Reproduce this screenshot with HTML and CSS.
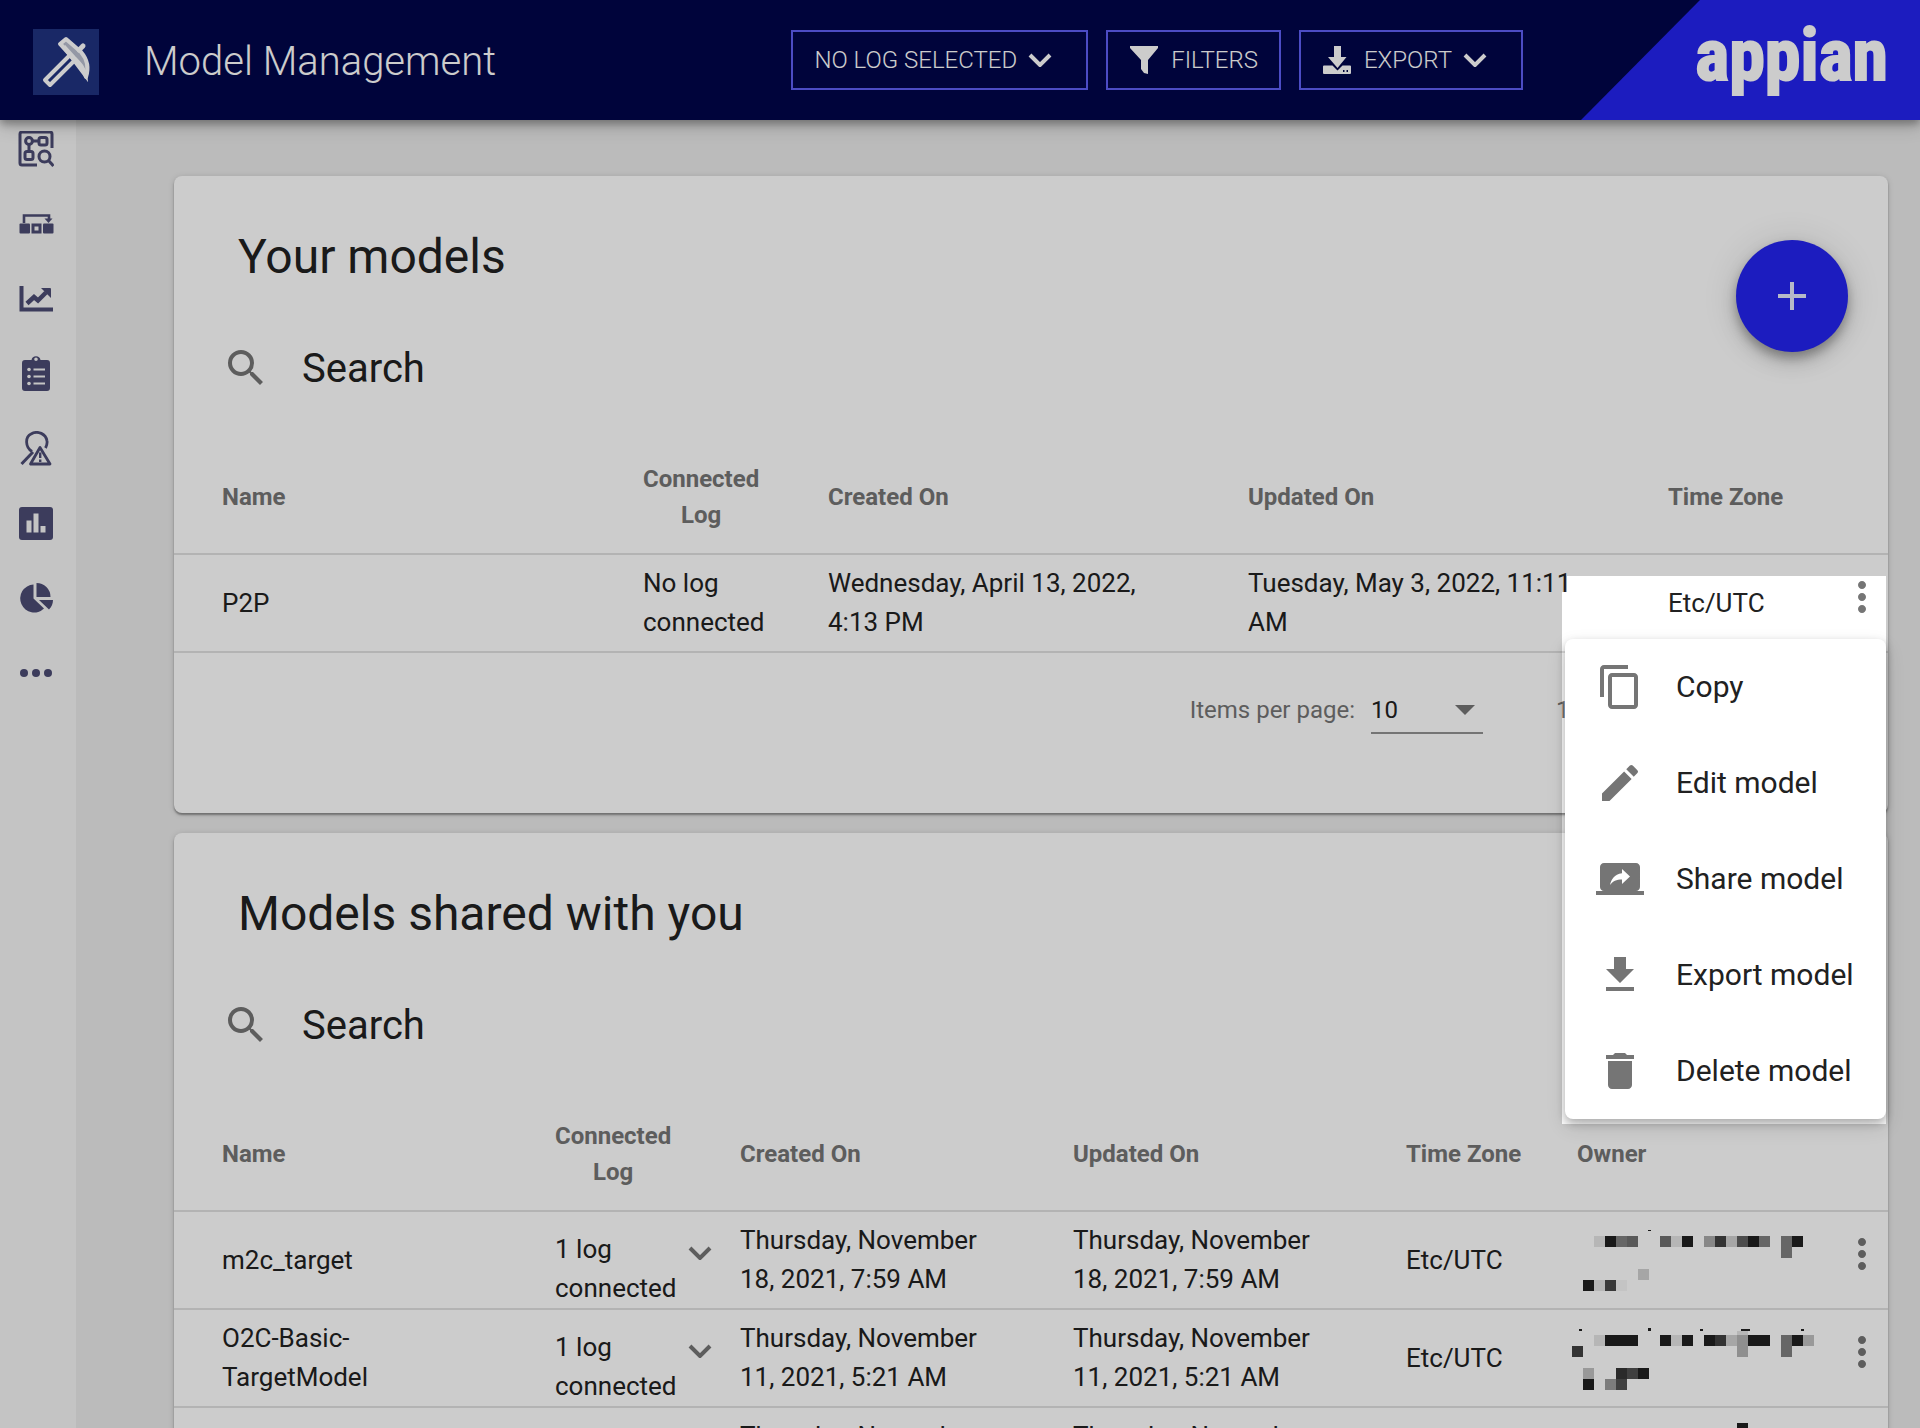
FILE: index.html
```html
<!DOCTYPE html>
<html lang="en">
<head>
<meta charset="utf-8">
<title>Model Management</title>
<link rel="stylesheet" href="styles.css">
</head>
<body>
<svg class="sprite" aria-hidden="true">
  <symbol id="chevron" viewBox="0 0 24 14"><path d="M2 2l10 10L22 2" fill="none" stroke="currentColor" stroke-width="4"/></symbol>
  <symbol id="search" viewBox="0 0 24 24"><path d="M15.5 14h-.79l-.28-.27A6.47 6.47 0 0 0 16 9.5 6.5 6.5 0 1 0 9.5 16c1.61 0 3.09-.59 4.23-1.57l.27.28v.79l5 4.99L20.49 19l-4.99-5zm-6 0C7.01 14 5 11.99 5 9.5S7.01 5 9.5 5 14 7.01 14 9.5 11.99 14 9.5 14z"/></symbol>
  <symbol id="more" viewBox="0 0 24 24"><path d="M12 8c1.1 0 2-.9 2-2s-.9-2-2-2-2 .9-2 2 .9 2 2 2zm0 2c-1.100 0-2 .9-2 2s.9 2 2 2 2-.9 2-2-.9-2-2-2zm0 6c-1.100 0-2 .9-2 2s.9 2 2 2 2-.9 2-2-.9-2-2-2z"/></symbol>
</svg>

<header class="topbar">
  <svg class="brand" viewBox="0 0 66 66" aria-hidden="true">
    <rect width="66" height="66" fill="#203280"/>
    <path d="M37 26L12 51l5 5 25-25z" fill="none" stroke="#fff" stroke-width="4" stroke-linejoin="round"/>
    <path d="M33 10l-6 5 10 11 5 5c5 4 9 10 11 17 3-9 1-18-5-25z" fill="#b9bfcf" stroke="#fff" stroke-width="4" stroke-linejoin="round"/>
    <path d="M29 16l24 32c-1-9-6-14-12-20L31 17" fill="#fff" stroke="#fff" stroke-width="3"/>
    <path d="M46 21l4-4" stroke="#fff" stroke-width="5" stroke-linecap="round"/>
  </svg>
  <h1 class="page-title">Model Management</h1>
  <div class="actions">
    <button class="action wide" type="button">NO LOG SELECTED<svg class="chev" aria-hidden="true"><use href="#chevron"/></svg></button>
    <button class="action" type="button">
      <svg class="lead" viewBox="0 0 28 28" aria-hidden="true"><path d="M0 0h28v2L18 14v14l-4-1-3-4v-9L0 2z"/></svg>FILTERS</button>
    <button class="action wide" type="button">
      <svg class="lead" viewBox="0 0 28 28" aria-hidden="true"><path d="M11 0h7v11h5.500L14.500 22 5 11h6z"/><path d="M1 19.500h8.500l5 5 5-5H27a1 1 0 0 1 1 1V27a1 1 0 0 1-1 1H1a1 1 0 0 1-1-1v-6.500a1 1 0 0 1 1-1z"/><path d="M20 25h1.500M23.500 25H25" stroke="#00064a" stroke-width="2"/></svg>EXPORT<svg class="chev" aria-hidden="true"><use href="#chevron"/></svg></button>
  </div>
  <div class="vendor"><span class="wordmark">appian</span></div>
</header>

<div class="shell">
  <nav class="rail" aria-label="Sections">
    <a href="#discovery" aria-label="Discovery"><svg viewBox="0 0 36 36"><g fill="none" stroke="currentColor" stroke-width="3"><path d="M34 17V3a2 2 0 0 0-2-2H4a2 2 0 0 0-2 2v29a2 2 0 0 0 2 2h15"/><circle cx="11" cy="10" r="3.400"/><rect x="21" y="6.500" width="8" height="7.500" rx="2"/><rect x="7" y="20.500" width="8" height="8" rx="2"/><path d="M14.500 10H21M11 14v6"/><circle cx="26.500" cy="25.500" r="5.500"/><path d="M30.500 29.500l5 5.500" stroke-width="3"/></g></svg></a>
    <a href="#process" aria-label="Process"><svg viewBox="0 0 36 36"><path d="M6 17V9.500h25V14" fill="none" stroke="currentColor" stroke-width="2.600"/><path d="M26.500 12.500h8L30.500 17z"/><rect x="1.500" y="17.500" width="10.500" height="10" rx="1"/><rect x="25" y="17.500" width="10.500" height="10" rx="1"/><rect x="15" y="19" width="7" height="7" fill="none" stroke="currentColor" stroke-width="3"/></svg></a>
    <a href="#trends" aria-label="Trends"><svg viewBox="0 0 36 36"><path d="M3.500 5v23.500H35" fill="none" stroke="currentColor" stroke-width="4"/><path d="M9 22.500l7-6.500 4 3.500 8-8" fill="none" stroke="currentColor" stroke-width="4.500"/><path d="M23 7h9a1 1 0 0 1 1 1v9z"/></svg></a>
    <a href="#tasks" aria-label="Tasks"><svg viewBox="0 0 36 36"><path fill-rule="evenodd" d="M7 4h6.500a4.600 4.600 0 0 1 9 0H29a3 3 0 0 1 3 3v25a3 3 0 0 1-3 3H7a3 3 0 0 1-3-3V7a3 3 0 0 1 3-3zm11-2.500a1.800 1.800 0 1 0 0 3.600 1.800 1.800 0 0 0 0-3.600z"/><g fill="#f5f5f5"><circle cx="11" cy="13.500" r="1.800"/><circle cx="11" cy="20.500" r="1.800"/><circle cx="11" cy="27.500" r="1.800"/><path d="M15.500 12.500H27v2H15.500zM15.500 19.500H27v2H15.500zM15.500 26.500H27v2H15.500z"/></g></svg></a>
    <a href="#alerts" aria-label="Alerts"><svg viewBox="0 0 36 36"><g fill="none" stroke="currentColor" stroke-width="2.800"><path d="M14 20.500C7 16 7 6 13 3c7-4 15 0 16 7 .500 3-.500 5-1.500 7"/><path d="M15 21L3.500 33" stroke-width="3"/><path d="M22 16.500L12.500 33h19.500z" stroke-linejoin="round"/></g><path d="M21 21.500h2.400v5.500H21zM21 28.500h2.400v2.400H21z"/></svg></a>
    <a href="#dashboards" aria-label="Dashboards"><svg viewBox="0 0 36 36"><rect x="1" y="1" width="34" height="33" rx="3"/><path fill="#f5f5f5" d="M8.500 14.500h5v12h-5zM15.500 7.500h5v19h-5zM22.500 20h5v6.500h-5z"/></svg></a>
    <a href="#reports" aria-label="Reports"><svg viewBox="0 0 36 36"><path d="M15.500 3.500v14l10.500 10A14 14 0 1 1 15.500 3.500zM18.500 2A14 14 0 0 1 32.500 16h-14zM21 19h14c0 4-1.500 7-4 9.500z"/></svg></a>
    <a href="#more-sections" aria-label="More"><svg viewBox="0 0 36 36"><circle cx="6" cy="17" r="4"/><circle cx="18" cy="17" r="4"/><circle cx="30" cy="17" r="4"/></svg></a>
  </nav>

  <main class="content">
    <section class="card">
      <h2 class="card-title">Your models</h2>
      <button class="fab" type="button" aria-label="Add model"><svg viewBox="0 0 28 28"><path d="M12 0h4v12h12v4H16v12h-4V16H0v-4h12z"/></svg></button>
      <label class="search"><svg aria-hidden="true"><use href="#search"/></svg><input type="search" placeholder="Search" aria-label="Search your models"></label>
      <table class="models">
        <colgroup><col><col class="c-log"><col class="c-date-lg"><col class="c-date-lg"><col class="c-zone-lg"><col class="c-more"></colgroup>
        <thead><tr><th class="name">Name</th><th><span class="stack">Connected<br>Log</span></th><th>Created On</th><th>Updated On</th><th>Time Zone</th><th></th></tr></thead>
        <tbody>
          <tr>
            <td class="name">P2P</td><td class="log">No log connected</td><td class="date">Wednesday, April 13, 2022, 4:13 PM</td><td class="date">Tuesday, May 3, 2022, 11:11 AM</td><td>Etc/UTC</td>
            <td class="more"><button class="kebab" type="button" aria-label="Model actions" aria-expanded="true"><svg><use href="#more"/></svg></button>
              <div class="spotlight"></div>
              <div class="menu" role="menu">
                <button type="button" role="menuitem"><svg viewBox="0 0 24 24"><path d="M16 1H4c-1.100 0-2 .9-2 2v14h2V3h12V1zm3 4H8c-1.100 0-2 .9-2 2v14c0 1.100.9 2 2 2h11c1.100 0 2-.9 2-2V7c0-1.100-.9-2-2-2zm0 16H8V7h11v14z"/></svg>Copy</button>
                <button type="button" role="menuitem"><svg viewBox="0 0 24 24"><path d="M3 17.250V21h3.750L17.810 9.940l-3.750-3.750L3 17.250zM20.710 7.040a1 1 0 0 0 0-1.410l-2.340-2.340a1 1 0 0 0-1.410 0l-1.830 1.830 3.750 3.750 1.830-1.830z"/></svg>Edit model</button>
                <button type="button" role="menuitem"><svg viewBox="0 0 24 24"><path d="M20 18c1.100 0 1.990-.9 1.990-2L22 6c0-1.110-.9-2-2-2H4c-1.110 0-2 .89-2 2v10c0 1.100.89 2 2 2H0v2h24v-2h-4zm-7-3.530v-2.190c-2.780 0-4.610.85-6 2.720.56-2.670 2.110-5.330 6-5.870V7l4 3.730-4 3.740z"/></svg>Share model</button>
                <button type="button" role="menuitem"><svg viewBox="0 0 24 24"><path d="M19 9h-4V3H9v6H5l7 7 7-7zM5 18v2h14v-2H5z"/></svg>Export model</button>
                <button type="button" role="menuitem"><svg viewBox="0 0 24 24"><path d="M6 19c0 1.100.9 2 2 2h8c1.100 0 2-.9 2-2V7H6v12zM19 4h-3.500l-1-1h-5l-1 1H5v2h14V4z"/></svg>Delete model</button>
              </div>
            </td>
          </tr>
        </tbody>
      </table>
      <div class="pager">
        <label for="page-size">Items per page:</label>
        <span class="select"><select id="page-size"><option>10</option><option>25</option></select></span>
        <span class="range">1 – 1 of 1</span>
      </div>
    </section>

    <section class="card">
      <h2 class="card-title">Models shared with you</h2>
      <label class="search"><svg aria-hidden="true"><use href="#search"/></svg><input type="search" placeholder="Search" aria-label="Search shared models"></label>
      <table class="models">
        <colgroup><col><col class="c-log"><col class="c-date"><col class="c-date"><col class="c-zone"><col class="c-owner"><col class="c-more"></colgroup>
        <thead><tr><th class="name">Name</th><th><span class="stack">Connected<br>Log</span></th><th>Created On</th><th>Updated On</th><th>Time Zone</th><th class="owner">Owner</th><th></th></tr></thead>
        <tbody>
          <tr>
            <td class="name">m2c_target</td><td class="linked"><button class="expand" type="button"><span>1 log connected</span><svg class="chev" aria-hidden="true"><use href="#chevron"/></svg></button></td><td class="date">Thursday, November 18, 2021, 7:59 AM</td><td class="date">Thursday, November 18, 2021, 7:59 AM</td><td>Etc/UTC</td>
            <td><svg class="redacted" viewBox="0 0 253 78" role="img" aria-label="Owner hidden"><g shape-rendering="crispEdges"><path fill="#202020" d="M33 15h11v11H33zM110 15h11v11h-11zM176 15h11v11h-11zM220 15h11v11h-11zM11 59h11v11H11zM76 9h3v1h-3z"/><path fill="#808080" d="M44 15h11v11H44zM187 15h11v11h-11zM209 15h11v22h-11z"/><path fill="#707070" d="M55 15h11v11H55zM88 15h11v11H88z"/><path fill="#e4e4e4" d="M22 15h11v11H22zM99 15h11v11H99zM22 59h11v11H22z"/><path fill="#a9a9a9" d="M132 15h11v11h-11z"/><path fill="#404040" d="M143 15h11v11h-11z"/><path fill="#d0d0d0" d="M154 15h11v11h-11zM66 48h11v11H66z"/><path fill="#606060" d="M165 15h11v11h-11z"/><path fill="#484848" d="M33 59h11v11H33z"/><path fill="#f5f5f5" d="M44 59h11v11H44z"/></g></svg></td>
            <td class="more"><button class="kebab" type="button" aria-label="Model actions"><svg><use href="#more"/></svg></button></td>
          </tr>
          <tr>
            <td class="name">O2C-Basic-<wbr>TargetModel</td><td class="linked"><button class="expand" type="button"><span>1 log connected</span><svg class="chev" aria-hidden="true"><use href="#chevron"/></svg></button></td><td class="date">Thursday, November 11, 2021, 5:21 AM</td><td class="date">Thursday, November 11, 2021, 5:21 AM</td><td>Etc/UTC</td>
            <td><svg class="redacted" viewBox="0 0 253 78" role="img" aria-label="Owner hidden"><g shape-rendering="crispEdges"><path fill="#202020" d="M33 16h33v11H33zM88 16h11v11H88zM110 16h11v11h-11zM132 16h11v11h-11zM176 16h22v11h-22zM220 16h11v11h-11zM66 49h11v11H66zM11 60h11v11H11zM7 10h3v2H7zM76 9h3v3h-3zM128 10h3v2h-3zM229 10h3v2h-3zM169 10h9v2h-9z"/><path fill="#e4e4e4" d="M22 16h11v11H22zM99 16h11v11H99zM165 12h11v4h-11z"/><path fill="#404040" d="M143 16h11v11h-11zM0 27h11v11H0z"/><path fill="#d0d0d0" d="M154 16h11v11h-11z"/><path fill="#b3b3b3" d="M165 16h11v22h-11z"/><path fill="#808080" d="M209 16h11v22h-11z"/><path fill="#c0c0c0" d="M231 16h11v11h-11zM11 49h11v11H11z"/><path fill="#353535" d="M44 49h11v11H44z"/><path fill="#505050" d="M55 49h11v11H55zM44 60h11v11H44z"/><path fill="#9c9c9c" d="M33 60h11v11H33z"/></g></svg></td>
            <td class="more"><button class="kebab" type="button" aria-label="Model actions"><svg><use href="#more"/></svg></button></td>
          </tr>
          <tr>
            <td class="name"></td><td></td><td class="date">Thursday, November 11, 2021, 5:21 AM</td><td class="date">Thursday, November 11, 2021, 5:21 AM</td><td>Etc/UTC</td>
            <td><svg class="redacted" viewBox="0 0 253 78" role="img" aria-label="Owner hidden"><path fill="#202020" d="M165 6h11v11h-11z"/></svg></td>
            <td></td>
          </tr>
        </tbody>
      </table>
    </section>
  </main>
</div>
</body>
</html>
```

FILE: styles.css
```css
* { box-sizing: border-box; }

body {
  margin: 0;
  height: 100vh;
  overflow: hidden;
  background: #eaeaea;
  color: #212121;
  font: 400 26px/39px Roboto, sans-serif;
}

button, input, select { font: inherit; color: inherit; }
button { border: 0; padding: 0; background: none; cursor: pointer; }
svg { display: block; fill: currentColor; flex: none; }
.sprite { position: absolute; width: 0; height: 0; }

/* Top bar */
.topbar {
  position: relative;
  z-index: 2;
  display: flex;
  align-items: center;
  height: 120px;
  padding-left: 33px;
  background: #00064a;
  color: #fff;
  box-shadow: 0 4px 8px rgba(0, 0, 0, .3), 0 8px 16px rgba(0, 0, 0, .14);
}
.brand { width: 66px; height: 66px; margin-top: 4px; }
.page-title {
  flex: 1;
  margin: 0;
  padding: 4px 0 0 45px;
  font-size: 40px;
  font-weight: 300;
  line-height: 48px;
}
.actions { display: flex; gap: 18px; margin-right: 58px; }
.action {
  display: flex;
  align-items: center;
  height: 60px;
  padding: 0 21px;
  border: 2px solid #6060f5;
  font-size: 24px;
  font-weight: 300;
  line-height: 36px;
}
.action.wide { padding-right: 34px; }
.lead { width: 28px; height: 28px; margin-right: 13px; margin-left: 1px; }
.chev { width: 24px; height: 14px; }
.action .chev { margin-left: 11px; }
.vendor {
  display: flex;
  justify-content: flex-end;
  align-items: center;
  width: 339px;
  height: 120px;
  padding: 0 32px 8px 0;
  background: #2323ef;
  clip-path: polygon(119px 0, 100% 0, 100% 100%, 0 100%);
}
.wordmark {
  font: 700 72px/80px "Liberation Sans Narrow", "Roboto Condensed", Roboto, sans-serif;
  -webkit-text-stroke: 2px currentColor;
}

/* Side rail and content */
.shell { display: flex; }
.rail {
  z-index: 1;
  display: flex;
  flex-direction: column;
  gap: 39px;
  flex: 0 0 76px;
  min-height: calc(100vh - 120px);
  padding: 11px 0 0 18px;
  background: #f5f5f5;
}
.rail a { color: #4b4b73; }
.rail svg { width: 36px; height: 36px; }
.content {
  flex: 1;
  display: flex;
  flex-direction: column;
  gap: 20px;
  padding: 56px 32px 0 98px;
}

/* Cards */
.card {
  position: relative;
  padding-top: 53px;
  border-radius: 8px;
  background: #fff;
  box-shadow: 0 2px 2px rgba(0, 0, 0, .35), 0 1px 6px rgba(0, 0, 0, .14);
}
.card-title {
  margin: 0 0 59px;
  padding-left: 64px;
  font-size: 48px;
  font-weight: 400;
  line-height: 56px;
}
.search {
  display: flex;
  gap: 32px;
  height: 48px;
  margin: 0 48px 49px;
}
.search svg { width: 48px; height: 48px; color: #757575; }
.search input {
  flex: 1;
  min-width: 0;
  padding: 2px 0 0;
  border: 0;
  outline: 0;
  background: none;
  font-size: 40px;
  line-height: 48px;
}
.search input::placeholder { color: #212121; opacity: 1; }
.fab {
  position: absolute;
  top: 64px;
  right: 40px;
  display: grid;
  place-items: center;
  width: 112px;
  height: 112px;
  border-radius: 50%;
  background: #2323ef;
  color: #e3e8fa;
  box-shadow: 0 6px 10px rgba(0, 0, 0, .25), 0 10px 20px rgba(0, 0, 0, .14), 0 2px 36px rgba(0, 0, 0, .12);
}
.fab svg { width: 28px; height: 28px; }

/* Tables */
.models { width: 100%; table-layout: fixed; border-collapse: separate; border-spacing: 0; }
.c-log { width: 185px; }
.c-date-lg { width: 420px; }
.c-zone-lg { width: 170px; }
.c-date { width: 333px; }
.c-zone { width: 166px; }
.c-owner { width: 266px; }
.c-more { width: 50px; }
.models th {
  height: 114px;
  padding: 0;
  border-bottom: 2px solid #e0e0e0;
  color: #757575;
  font-size: 24px;
  font-weight: 700;
  line-height: 36px;
  text-align: left;
}
.stack { display: inline-block; text-align: center; }
.models td { height: 98px; padding: 0; border-bottom: 2px solid #e0e0e0; }
.models .name { padding-left: 48px; padding-right: 90px; }
.models .date { padding-right: 90px; }
.models .log { padding-right: 40px; }
.models .linked { vertical-align: bottom; }
.models .owner { padding-left: 5px; }
.expand { display: flex; gap: 12px; text-align: left; }
.expand span { width: 121px; }
.expand .chev { margin-top: 16px; color: #757575; }
.redacted { width: 253px; height: 78px; }
.models .more { position: relative; padding-bottom: 12px; }
.kebab { display: block; color: #757575; }
.kebab svg { width: 48px; height: 48px; }

/* Dims the page around the open row menu */
.spotlight {
  position: absolute;
  z-index: 10;
  top: 21px;
  right: 2px;
  width: 324px;
  height: 548px;
  box-shadow: 0 0 0 3000px rgba(0, 0, 0, .2);
  pointer-events: none;
}
.spotlight::before {
  content: "";
  display: block;
  width: 5px;
  height: 16px;
  background: rgba(0, 0, 0, .2);
}
.menu {
  position: absolute;
  z-index: 11;
  top: 84px;
  right: 2px;
  width: 321px;
  border-radius: 8px;
  background: #fff;
  box-shadow: 0 4px 8px rgba(0, 0, 0, .26), 0 8px 20px rgba(0, 0, 0, .12);
}
.menu button {
  display: flex;
  align-items: center;
  gap: 32px;
  width: 100%;
  height: 96px;
  padding-left: 31px;
  font-size: 30px;
  line-height: 38px;
  white-space: nowrap;
}
.menu svg { width: 48px; height: 48px; color: #757575; }

/* Paginator */
.pager {
  display: flex;
  justify-content: flex-end;
  height: 160px;
  padding-top: 38px;
  color: #757575;
  font-size: 24px;
}
.select { position: relative; width: 112px; margin: 0 74px 0 16px; }
.select select {
  width: 100%;
  height: 43px;
  padding: 0 0 2px;
  border: 0;
  border-bottom: 2px solid #929292;
  border-radius: 0;
  outline: 0;
  background: none;
  color: #212121;
  appearance: none;
}
.select::after {
  content: "";
  position: absolute;
  top: 14px;
  right: 8px;
  border: 10px solid transparent;
  border-top-color: #757575;
  border-bottom: 0;
}
.range { flex: 0 0 332px; margin-left: -1px; }
```
